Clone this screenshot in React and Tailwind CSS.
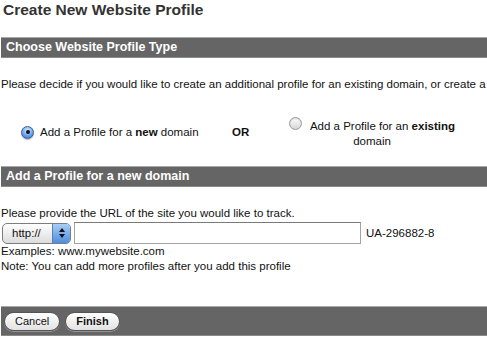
import React from "react";

function Radio({ checked }) {
  if (checked) {
    return (
      <span className="inline-flex w-[13px] h-[13px] shrink-0 items-center justify-center rounded-full border border-[#3b5f93] bg-[radial-gradient(circle_at_50%_30%,#d8ecff_0%,#6aa6ec_55%,#2a6cc8_100%)] shadow-[0_1px_1px_rgba(0,0,0,0.3)]">
        <span className="w-[4px] h-[4px] rounded-full bg-[#111]" />
      </span>
    );
  }
  return (
    <span className="inline-block w-[13px] h-[13px] shrink-0 rounded-full border border-[#9a9a9a] bg-[linear-gradient(#fdfdfd,#d6d6d6)] shadow-[inset_0_1px_1px_rgba(0,0,0,0.15)]" />
  );
}

function Bar({ children }) {
  return (
    <div className="ml-[1px] h-[21px] flex items-center border-t border-[#a9a9a9] border-b border-b-[#8a8a8a] bg-[#656565] pl-[5px] text-[12.5px] font-bold text-white whitespace-nowrap">
      {children}
    </div>
  );
}

function PillButton({ children, bold }) {
  return (
    <button
      className={
        "h-[19px] rounded-full border border-[#555] bg-[linear-gradient(#ffffff,#e2e2e2)] px-[10px] text-[11px] leading-none text-[#111] shadow-[0_1px_0_rgba(255,255,255,0.3)] " +
        (bold ? "font-bold" : "")
      }
    >
      {children}
    </button>
  );
}

export default function App() {
  return (
    <div className="w-[487px] h-[341px] overflow-hidden bg-white font-['Liberation_Sans',Arial,sans-serif] text-[11.5px] leading-[15px] text-[#111]">
      <h1 className="pl-[3px] text-[15.5px] font-bold leading-[20px] text-[#333]">
        Create New Website Profile
      </h1>

      <div className="mt-[17px]">
        <Bar>Choose Website Profile Type</Bar>
      </div>

      <p className="mt-[19px] pl-[1px] whitespace-nowrap">
        Please decide if you would like to create an additional profile for an existing domain, or create a
      </p>

      {/* profile type choice */}
      <div className="mt-[27px] flex items-start">
        <div className="w-[232px] pl-[21px] mt-[6px] flex items-start whitespace-nowrap">
          <span className="-mt-[2px]">
            <Radio checked />
          </span>
          <span className="ml-[6px]">
            Add a Profile for a <b>new</b> domain
          </span>
        </div>
        <div className="w-[55px] mt-[6px] font-bold">OR</div>
        <div className="w-[170px] text-center">
          <div className="flex items-start justify-center whitespace-nowrap">
            <span className="-mt-[2px]">
              <Radio />
            </span>
            <span className="ml-[8px]">
              Add a Profile for an <b>existing</b>
            </span>
          </div>
          <div>domain</div>
        </div>
      </div>

      <div className="mt-[17px]">
        <Bar>Add a Profile for a new domain</Bar>
      </div>

      <p className="mt-[19px] pl-[1px] whitespace-nowrap">
        Please provide the URL of the site you would like to track.
      </p>

      <div className="mt-[1px] flex items-center">
        <div className="ml-[2px] flex h-[21px] w-[69px] overflow-hidden rounded-[5px] border border-[#7d7d7d] bg-[linear-gradient(#ffffff,#dcdcdc)]">
          <span className="flex-1 pl-[9px] leading-[19px] text-[#111]">http://</span>
          <span className="flex w-[18px] flex-col items-center justify-center gap-[2px] border-l border-[#5c7fb4] bg-[linear-gradient(#a9cdf6,#4d8ee0)]">
            <span className="h-0 w-0 border-x-[3px] border-b-[4px] border-x-transparent border-b-[#111]" />
            <span className="h-0 w-0 border-x-[3px] border-t-[4px] border-x-transparent border-t-[#111]" />
          </span>
        </div>
        <div className="ml-[3px] h-[22px] w-[287px] border border-[#a4a4a4] border-t-[#7a7a7a] bg-white" />
        <span className="ml-[5px]">UA-296882-8</span>
      </div>

      <p className="pl-[1px] whitespace-nowrap">Examples: www.mywebsite.com</p>
      <p className="pl-[1px] whitespace-nowrap">Note: You can add more profiles after you add this profile</p>

      <div className="mt-[32px] ml-[1px] flex h-[30px] items-center gap-[5px] border-t border-[#a9a9a9] border-b border-b-[#8a8a8a] bg-[#656565] pl-[3px]">
        <PillButton>Cancel</PillButton>
        <PillButton bold>Finish</PillButton>
      </div>
    </div>
  );
}
